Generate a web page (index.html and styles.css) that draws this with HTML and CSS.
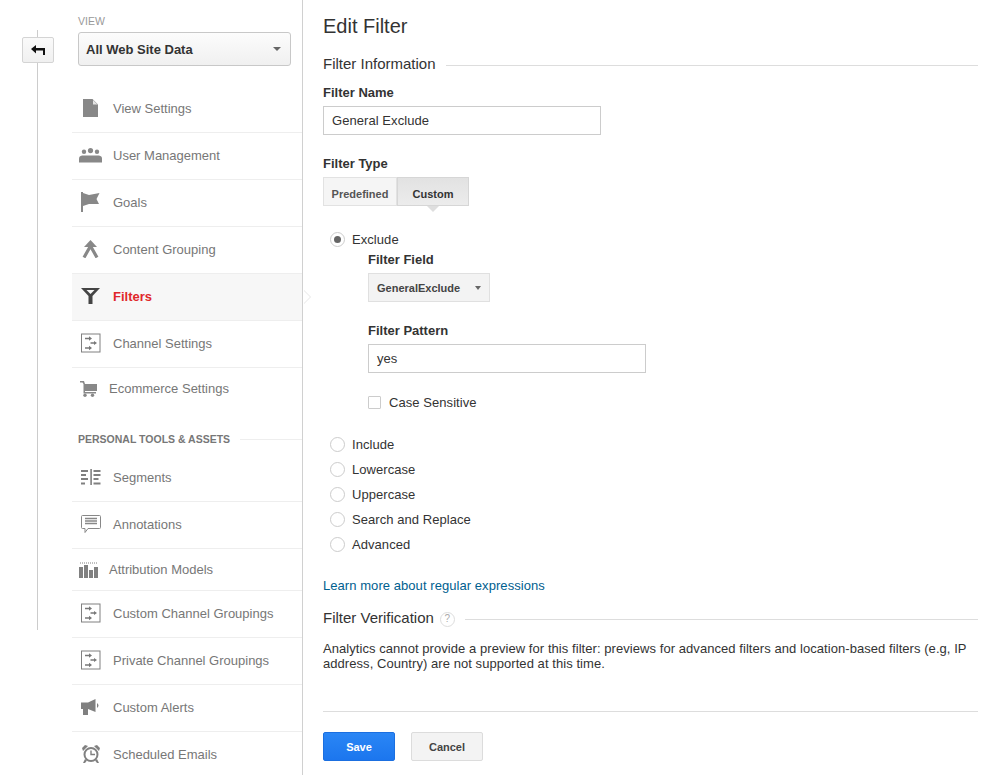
FILE: index.html
```html
<!DOCTYPE html>
<html lang="en">
<head>
<meta charset="utf-8">
<title>Edit Filter</title>
<link rel="stylesheet" href="styles.css">
</head>
<body>
<svg class="defs" width="0" height="0" aria-hidden="true">
  <symbol id="i-channel" viewBox="0 0 20 20">
    <rect x="0.5" y="1" width="18.500" height="18" fill="none" stroke="#808080" stroke-width="1"/>
    <path d="M4 5.500h4" fill="none" stroke="#777" stroke-width="1.500"/>
    <path d="M8 3.300 11 5.500 8 7.700z" fill="#777"/>
    <path d="M9.500 10h3.500" fill="none" stroke="#777" stroke-width="1.500"/>
    <path d="M13 8 16 10 13 12z" fill="#777"/>
    <path d="M4 15h4" fill="none" stroke="#777" stroke-width="1.500"/>
    <path d="M8 12.800 11 15 8 17.200z" fill="#777"/>
  </symbol>
</svg>
<div class="layout">
  <div class="rail">
    <button class="back" type="button" aria-label="Back">
      <svg width="14" height="10" viewBox="0 0 14 10"><path d="M0 4 5 0V3H14V10H12V5.600H5V8.500z" fill="#111"/></svg>
    </button>
  </div>
  <nav class="side">
    <div class="view-label">VIEW</div>
    <div class="view-select"><span>All Web Site Data</span><i class="caret"></i></div>
    <ul class="menu menu-first">
      <li class="item"><span class="ico"><svg width="15" height="18" viewBox="0 0 15 18"><path d="M0 0H9.500L15 5.500V18H0z" fill="#888"/><path d="M10 1 14.500 5.500H10z" fill="#e4e4e4"/></svg></span>View Settings</li>
      <li class="item"><span class="ico"><svg width="23" height="15" viewBox="0 0 23 15"><g fill="#888"><circle cx="5" cy="3.800" r="2.200"/><circle cx="11.500" cy="2.600" r="2.600"/><circle cx="18" cy="3.800" r="2.200"/><path d="M0 14.500V10.500Q0 8 3 7.500H20Q23 8 23 10.500V14.500z"/></g></svg></span>User Management</li>
      <li class="item"><span class="ico"><svg width="19" height="20" viewBox="0 0 19 20"><path d="M0 0H2V20H0z" fill="#888"/><path d="M2 1 8 3 18.500 1 15.500 7 18 12 8 12 2 14z" fill="#888"/></svg></span>Goals</li>
      <li class="item"><span class="ico"><svg width="17" height="18" viewBox="0 0 17 18"><path d="M8.500 0 15 7H2z" fill="#888"/><path d="M8.500 6 2 17.500M8.500 6 15 17.500" fill="none" stroke="#888" stroke-width="3.200"/></svg></span>Content Grouping</li>
      <li class="item item-active"><span class="ico"><svg width="19" height="16" viewBox="0 0 19 16"><path d="M0 0H19L11.500 8V16H7.500V8zM5.500 2 9.500 6 13.500 2z" fill-rule="evenodd" fill="#444"/></svg></span>Filters</li>
      <li class="item"><span class="ico"><svg width="20" height="20"><use href="#i-channel"/></svg></span>Channel Settings</li>
      <li class="item item-narrow item-end"><span class="ico"><svg width="17" height="16" viewBox="0 0 17 16"><path d="M0 0H4L5 3H17V10H5V11H16V12.500H3.500V3L2.500 1.500H0z" fill="#888"/><circle cx="5" cy="14.300" r="1.700" fill="#888"/><circle cx="12.500" cy="14.300" r="1.700" fill="#888"/></svg></span>Ecommerce Settings</li>
    </ul>
    <div class="side-head"><span>PERSONAL TOOLS &amp; ASSETS</span></div>
    <ul class="menu menu-tools">
      <li class="item"><span class="ico"><svg width="20" height="16" viewBox="0 0 20 16"><path d="M9.300 0h1.600v16H9.300zM0 1h7v2H0zM12.500 1h7v2h-7zM0 5h5v2H0zM12.500 5h7v2h-7zM0 9h7v2H0zM12.500 9h5v2h-5zM0 13.500h4v2H0zM12.500 13.500h7v2h-7z" fill="#808080"/></svg></span>Segments</li>
      <li class="item"><span class="ico"><svg width="20" height="19" viewBox="0 0 20 19"><path d="M1.500.5h17q1 0 1 1v11q0 1-1 1H7l-3 4v-4H1.500q-1 0-1-1v-11q0-1 1-1z" fill="none" stroke="#888"/><path d="M4 3.500h12M4 6h12M4 8.500h12" stroke="#888" stroke-width="1.300"/></svg></span>Annotations</li>
      <li class="item item-narrow item-short"><span class="ico"><svg width="19" height="16" viewBox="0 0 19 16"><path d="M0 5h4v11H0zM5 3h4v13H5zM10 8h4v8h-4zM15 5h4v11h-4z" fill="#808080"/><path d="M1 1h17" stroke="#808080" stroke-dasharray="1 1"/></svg></span>Attribution Models</li>
      <li class="item"><span class="ico"><svg width="20" height="20"><use href="#i-channel"/></svg></span>Custom Channel Groupings</li>
      <li class="item"><span class="ico"><svg width="20" height="20"><use href="#i-channel"/></svg></span>Private Channel Groupings</li>
      <li class="item"><span class="ico"><svg width="19" height="16" viewBox="0 0 19 16"><path d="M0 3.500H7L14.500 0V13L7 10V16H2V10H0z" fill="#808080"/><path d="M16 4Q19 6.500 16 9z" fill="#808080"/></svg></span>Custom Alerts</li>
      <li class="item"><span class="ico"><svg width="18" height="18" viewBox="0 0 18 18"><circle cx="9" cy="9.500" r="6.500" fill="none" stroke="#808080" stroke-width="2"/><path d="M9 5.500V9.500H13" fill="none" stroke="#808080" stroke-width="1.400"/><path d="M0 3 3 0 6 1 1 6zM18 3 15 0 12 1 17 6zM3 14 1 18H3L5 15.500zM15 14 17 18H15L13 15.500z" fill="#808080"/></svg></span>Scheduled Emails</li>
    </ul>
  </nav>
  <main class="main">
    <h1 class="title">Edit Filter</h1>
    <h2 class="section"><span>Filter Information</span></h2>
    <div class="label label-name">Filter Name</div>
    <div class="input input-name">General Exclude</div>
    <div class="label label-type">Filter Type</div>
    <div class="tabs">
      <div class="tab">Predefined</div>
      <div class="tab tab-on">Custom</div>
    </div>
    <div class="radio radio-first"><i class="dot dot-on"></i>Exclude</div>
    <div class="nested">
      <div class="label">Filter Field</div>
      <div class="field-select"><span>GeneralExclude</span><i class="caret caret-small"></i></div>
      <div class="label label-pattern">Filter Pattern</div>
      <div class="input input-pattern">yes</div>
      <div class="check"><i class="box"></i>Case Sensitive</div>
    </div>
    <div class="radio radio-include"><i class="dot"></i>Include</div>
    <div class="radio"><i class="dot"></i>Lowercase</div>
    <div class="radio"><i class="dot"></i>Uppercase</div>
    <div class="radio"><i class="dot"></i>Search and Replace</div>
    <div class="radio"><i class="dot"></i>Advanced</div>
    <a class="learn" href="#">Learn more about regular expressions</a>
    <h2 class="section section-verify"><span>Filter Verification<i class="help">?</i></span></h2>
    <p class="note">Analytics cannot provide a preview for this filter: previews for advanced filters and location-based filters (e.g, IP address, Country) are not supported at this time.</p>
    <div class="actions">
      <button class="btn btn-save" type="button">Save</button>
      <button class="btn btn-cancel" type="button">Cancel</button>
    </div>
  </main>
</div>
</body>
</html>
```
FILE: styles.css
```css
* { box-sizing: border-box; }
html, body { margin: 0; padding: 0; height: 775px; overflow: hidden; background: #fff; }
body { font-family: "Liberation Sans", Arial, sans-serif; font-size: 13px; color: #333; }
.defs { display: block; height: 0; }
.layout { display: flex; height: 775px; }

.rail { position: relative; width: 72px; flex: none; padding: 37px 0 0 22px; }
.rail::before { content: ""; position: absolute; left: 37px; top: 30px; height: 600px; width: 1px; background: #ccc; }
.back { position: relative; display: flex; align-items: center; justify-content: center; width: 32px; height: 26px; padding: 0; border: 1px solid #d4d4d4; border-radius: 2px; background: linear-gradient(#fafafa, #f0f0f0); }

.side { width: 231px; flex: none; border-right: 1px solid #d0d0d0; position: relative; }
.view-label { margin: 15px 0 0 6px; font-size: 10.500px; line-height: 12px; color: #999; }
.view-select { display: flex; align-items: center; justify-content: space-between; margin: 5px 11px 0 6px; height: 34px; padding: 0 9px 0 7px; border: 1px solid #c8c8c8; border-radius: 3px; background: linear-gradient(#fcfcfc, #f0f0f0); font-weight: bold; color: #333; }
.caret { display: block; width: 0; height: 0; border: 4px solid transparent; border-top: 4px solid #666; border-bottom: 0; }
.menu { list-style: none; margin: 0; padding: 0; }
.menu-first { margin-top: 20px; }
.menu-tools { margin-top: 4px; }
.item { display: flex; align-items: center; height: 47px; padding-bottom: 2px; border-bottom: 1px solid #eee; color: #777; font-size: 13px; white-space: nowrap; }
.ico { width: 37px; margin-right: 4px; flex: none; display: flex; align-items: center; justify-content: center; }
.item-active { position: relative; background: #f7f7f7; color: #e0272b; font-weight: bold; }
.item-active::after { content: ""; position: absolute; left: 100%; top: 16px; margin-left: 1px; width: 0; height: 0; border-left: 7px solid #fff; border-top: 7px solid transparent; border-bottom: 7px solid transparent; filter: drop-shadow(1px 0 0 #e6e6e6); }
.item-narrow .ico { width: 33px; }
.item-end { border-bottom: 0; height: 43px; }
.item-short { height: 42px; padding-bottom: 0; }
.side-head { display: flex; align-items: center; margin: 16px 0 0 6px; height: 24px; font-size: 10.500px; font-weight: bold; color: #777; }
.side-head::after { content: ""; flex: 1; height: 1px; background: #eee; margin-left: 10px; }

.main { margin-left: 20px; width: 655px; flex: none; letter-spacing: .06px; }
.title { margin: 15px 0 0; font-size: 20px; font-weight: normal; line-height: 23px; letter-spacing: 0; color: #333; }
.section { display: flex; align-items: center; margin: 17px 0 0; font-size: 15px; font-weight: normal; line-height: 18px; letter-spacing: 0; color: #333; }
.section::after { content: ""; flex: 1; height: 1px; background: #ddd; margin: 2px 0 0 10px; }
.label { font-weight: bold; line-height: 15px; letter-spacing: 0; color: #333; }
.label-name { margin-top: 12px; }
.input { display: flex; align-items: center; height: 29px; border: 1px solid #ccc; padding-left: 8px; color: #333; }
.input-name { width: 278px; margin-top: 6px; }
.label-type { margin-top: 21px; }
.tabs { display: flex; margin-top: 6px; height: 29px; letter-spacing: 0; }
.tab { display: flex; align-items: center; justify-content: center; width: 74px; height: 29px; padding-top: 5px; border: 1px solid #e2e2e2; background: #f5f5f5; font-size: 11px; font-weight: bold; color: #555; }
.tab-on { position: relative; width: 72px; background: linear-gradient(#e2e2e2, #ececec); border-color: #d6d6d6; color: #333; }
.tab-on::after { content: ""; position: absolute; left: 29px; top: 28px; border: 6px solid transparent; border-top: 6px solid #dedede; border-bottom: 0; }
.radio { display: flex; align-items: center; height: 25px; }
.radio-first { margin-top: 21px; }
.radio-include { margin-top: 21px; }
.dot { position: relative; display: block; width: 15px; height: 15px; margin: 0 7px; border: 1px solid #ccc; border-radius: 50%; background: #fff; }
.dot-on::after { content: ""; position: absolute; left: 3px; top: 3px; width: 7px; height: 7px; border-radius: 50%; background: #666; }
.nested { padding-left: 45px; }
.field-select { display: flex; align-items: center; justify-content: space-between; width: 122px; height: 29px; margin-top: 6px; padding: 0 8px 0 8px; border: 1px solid #e0e0e0; background: #f3f3f3; font-size: 11px; font-weight: bold; letter-spacing: 0; color: #444; }
.caret-small { border-width: 3.500px; border-top-width: 4px; border-bottom: 0; }
.label-pattern { margin-top: 21px; }
.input-pattern { width: 278px; margin-top: 6px; }
.check { display: flex; align-items: center; margin-top: 20px; height: 18px; }
.box { display: block; width: 13px; height: 13px; margin-right: 8px; border: 1px solid #ccc; border-radius: 1px; }
.learn { display: block; margin-top: 21px; line-height: 15px; color: #00608f; text-decoration: none; }
.section-verify { margin-top: 16px; }
.section-verify span { display: flex; align-items: center; }
.help { display: flex; align-items: center; justify-content: center; width: 15px; height: 15px; margin: 2px 0 0 6px; border: 1px solid #ddd; border-radius: 50%; font-style: normal; font-size: 10px; color: #aaa; }
.note { margin: 14px 0 0; line-height: 15px; color: #333; }
.actions { display: flex; gap: 16px; margin-top: 40px; padding-top: 20px; border-top: 1px solid #ddd; }
.btn { width: 72px; height: 29px; padding: 0; border-radius: 2px; font-family: inherit; font-size: 11px; font-weight: bold; }
.btn-save { border: 1px solid #1b6fe0; background: linear-gradient(#2a86f5, #1c76ee); color: #fff; }
.btn-cancel { border: 1px solid #dcdcdc; background: #f3f3f3; color: #444; }
```
